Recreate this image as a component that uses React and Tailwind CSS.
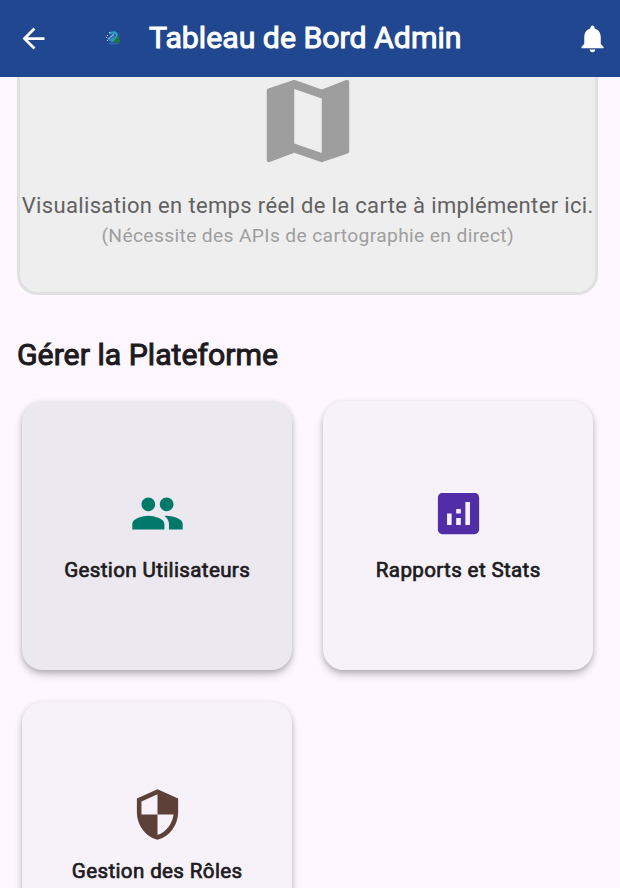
import React from 'react';

const PATHS = {
  back: 'M20 11H7.83l5.59-5.59L12 4l-8 8 8 8 1.41-1.41L7.83 13H20v-2z',
  bell: 'M12 22c1.1 0 2-.9 2-2h-4c0 1.1.89 2 2 2zm6-6v-5c0-3.07-1.64-5.64-4.5-6.32V4c0-.83-.67-1.5-1.5-1.5s-1.5.67-1.5 1.5v.68C7.63 5.36 6 7.92 6 11v5l-2 2v1h16v-1l-2-2z',
  map: 'M20.5 3l-.16.03L15 5.1 9 3 3.36 4.9c-.21.07-.36.25-.36.48V20.5c0 .28.22.5.5.5l.16-.03L9 18.9l6 2.1 5.64-1.9c.21-.07.36-.25.36-.48V3.5c0-.28-.22-.5-.5-.5zM15 19l-6-2.11V5l6 2.11V19z',
  people: 'M16 11c1.66 0 2.99-1.34 2.99-3S17.66 5 16 5c-1.66 0-3 1.34-3 3s1.34 3 3 3zm-8 0c1.66 0 2.99-1.34 2.99-3S9.66 5 8 5C6.34 5 5 6.34 5 8s1.34 3 3 3zm0 2c-2.33 0-7 1.17-7 3.5V19h14v-2.5c0-2.33-4.67-3.5-7-3.5zm8 0c-.29 0-.62.02-.97.05 1.16.84 1.97 1.97 1.97 3.45V19h6v-2.5c0-2.33-4.67-3.5-7-3.5z',
  stats: 'M19 3H5c-1.1 0-2 .9-2 2v14c0 1.1.9 2 2 2h14c1.1 0 2-.9 2-2V5c0-1.1-.9-2-2-2zM9 17H7v-5h2v5zm4 0h-2v-3h2v3zm0-5h-2v-2h2v2zm4 5h-2V7h2v10z',
  shield: 'M12 1L3 5v6c0 5.55 3.84 10.74 9 12 5.16-1.26 9-6.45 9-12V5l-9-4zm0 10.99h7c-.53 4.12-3.28 7.79-7 8.94V12H5V6.3l7-3.11v8.8z',
};

function Icon({ name, className }) {
  return (
    <svg viewBox="0 0 24 24" fill="currentColor" className={`shrink-0 ${className}`}>
      <path d={PATHS[name]} />
    </svg>
  );
}

function Logo() {
  return (
    <svg viewBox="0 0 14 14" className="mb-[2px] ml-[56px] h-[14px] w-[14px] shrink-0" fill="none">
      <path d="M3.500 3C6 .5 10.500 .8 10.800 4c.2 2.500-2 4.500-5.500 6.500" stroke="#2f9cc4" strokeWidth="2.200" />
      <path d="M2 8.500l6-5.500" stroke="#6fb9ea" strokeWidth="1.600" />
      <path d="M3.500 10l5.500-5" stroke="#3f86cc" strokeWidth="1.600" />
      <path d="M3 12.500h9" stroke="#2f64ae" strokeWidth="2" />
      <path d="M12.500 5L8.500 10H14M12.500 5v8" stroke="#22802c" strokeWidth="1.400" />
      <path d="M3 1.500h1M1 4.500h1M0 6.500h1M1 9.500h1" stroke="#d6eef2" />
    </svg>
  );
}

function Card({ icon, color, label, bg }) {
  return (
    <div className={`flex h-[269px] flex-col items-center rounded-[20.6px] pt-[85px] shadow-[0_5px_9px_-1px_rgba(0,0,0,0.26),0_1px_5px_rgba(0,0,0,0.12)] ${bg}`}>
      <Icon name={icon} className={`h-[55px] w-[55px] ${color}`} />
      <span className="mt-[14px] text-[20.6px] leading-[30px] tracking-[0.344px] whitespace-nowrap text-[#1d1b20] [-webkit-text-stroke:0.7px_#1d1b20]">
        {label}
      </span>
    </div>
  );
}

export default function App() {
  return (
    <div className="flex h-[888px] w-[620px] flex-col overflow-hidden bg-[#fef7ff] font-['Roboto',sans-serif] font-normal">
      <header className="flex h-[77px] shrink-0 items-center bg-[#20478f] pr-[11px] pl-[17px] text-white">
        <Icon name="back" className="h-[33px] w-[33px]" />
        <Logo />
        <h1 className="mb-[2px] ml-[29px] text-[30.25px] leading-[36px] whitespace-nowrap [-webkit-text-stroke:1px_#ffffff]">
          Tableau de Bord Admin
        </h1>
        <Icon name="bell" className="ml-auto h-[33px] w-[33px]" />
      </header>
      <main className="min-h-0 grow overflow-hidden pr-[21.6px] pl-[17px]">
        <section className="flex h-[218px] flex-col items-center rounded-b-[20.6px] border-x-[3px] border-b-[3px] border-[#e0e0e0] bg-[#eeeeee]">
          <Icon name="map" className="-mt-[11px] h-[110px] w-[110px] text-[#9e9e9e]" />
          <p className="mt-[14px] text-[22px] leading-[32px] tracking-[0.344px] whitespace-nowrap text-[#616161]">
            Visualisation en temps réel de la carte à implémenter ici.
          </p>
          <p className="text-[19.25px] leading-[28px] tracking-[0.344px] whitespace-nowrap text-[#9e9e9e]">
            (Nécessite des APIs de cartographie en direct)
          </p>
        </section>
        <h2 className="mt-[41px] text-[30.25px] leading-[38px] whitespace-nowrap text-[#1d1b20] [-webkit-text-stroke:1px_#1d1b20]">
          Gérer la Plateforme
        </h2>
        <div className="mt-[27px] grid grid-cols-2 gap-x-[31.5px] gap-y-[31.5px] px-[5.4px]">
          <Card icon="people" color="text-[#00796b]" label="Gestion Utilisateurs" bg="bg-[#ebe8ef]" />
          <Card icon="stats" color="text-[#512da8]" label="Rapports et Stats" bg="bg-[#f7f2fa]" />
          <Card icon="shield" color="text-[#5d4037]" label="Gestion des Rôles" bg="bg-[#f7f2fa]" />
        </div>
      </main>
    </div>
  );
}
